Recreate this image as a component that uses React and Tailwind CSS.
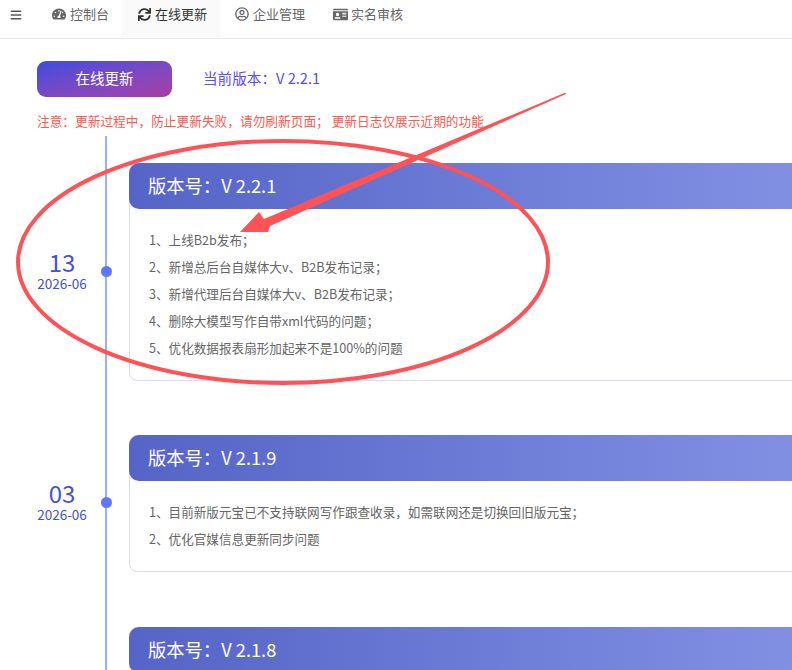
import { FaBars, FaTachometerAlt, FaSync, FaRegUserCircle, FaIdCard } from "react-icons/fa";

const tabs = [
  { label: "控制台", icon: FaTachometerAlt, size: 14 },
  { label: "在线更新", icon: FaSync, size: 13, active: true },
  { label: "企业管理", icon: FaRegUserCircle, size: 14 },
  { label: "实名审核", icon: FaIdCard, size: 15 },
];

const versions = [
  {
    day: "13",
    month: "2026-06",
    version: "V 2.2.1",
    notes: [
      "1、上线B2b发布；",
      "2、新增总后台自媒体大v、B2B发布记录；",
      "3、新增代理后台自媒体大v、B2B发布记录；",
      "4、删除大模型写作自带xml代码的问题；",
      "5、优化数据报表扇形加起来不是100%的问题",
    ],
  },
  {
    day: "03",
    month: "2026-06",
    version: "V 2.1.9",
    notes: [
      "1、目前新版元宝已不支持联网写作跟查收录，如需联网还是切换回旧版元宝；",
      "2、优化官媒信息更新同步问题",
    ],
  },
  { version: "V 2.1.8", notes: [] },
];

function TimelineRow({ item }) {
  return (
    <div className="group flex pt-[27px] pb-[27px] last:pt-[28px] last:pb-0">
      <div className="w-[105px] shrink-0 pl-[37px] flex items-center">
        {item.day && (
          <div className="w-[50px] mb-[6px] flex flex-col items-center text-[#3f51e0]">
            <span className="text-[24px] leading-[27px]">{item.day}</span>
            <span className="text-[13.5px] leading-[16px] whitespace-nowrap">{item.month}</span>
          </div>
        )}
      </div>

      {/* line + dot */}
      <div className="w-[2px] shrink-0 -mt-[27px] -mb-[27px] group-last:-mt-[28px] bg-[#9aaeff] flex items-center justify-center">
        {item.day && <div className="w-[11px] h-[11px] mb-[2px] shrink-0 rounded-full bg-[#5f78fb]" />}
      </div>

      <div className="w-[680px] shrink-0 ml-[22px] min-h-[137px] rounded-[8px] border border-[#dcd8fa]">
        <div className="h-[46px] -m-px mb-0 pl-[19px] flex items-center rounded-[10px] rounded-r-none bg-gradient-to-r from-[#5564c6] to-[#8391e4] text-white text-[18.3px]">
          版本号：{item.version}
        </div>
        {item.notes.length > 0 && (
          <div className="pt-[17px] pb-[19px] px-[19px] text-[12.6px] leading-[27px] text-[#666]">
            {item.notes.map((note) => (
              <p key={note} className="whitespace-nowrap">
                {note}
              </p>
            ))}
          </div>
        )}
      </div>
    </div>
  );
}

export default function App() {
  return (
    <div
      className="relative w-[792px] h-[670px] overflow-hidden bg-white"
      style={{ fontFamily: '"Noto Sans CJK SC", sans-serif' }}
    >
      {/* Top nav */}
      <div className="h-[39px] flex border-b border-[#e9e9e9] text-[13px] text-[#666]">
        <div className="w-[37px] shrink-0 pl-[10px] pb-[8px] flex items-center">
          <FaBars size={12} className="text-[#555]" />
        </div>
        {tabs.map((tab) => {
          const Icon = tab.icon;
          return (
            <div
              key={tab.label}
              className={`pl-[15px] pr-[13px] pb-[10px] flex items-center gap-[4px] ${
                tab.active ? "bg-[#fafafa] text-[#333]" : ""
              }`}
            >
              <span className="w-[14px] flex justify-center">
                <Icon size={tab.size} className="shrink-0" />
              </span>
              <span>{tab.label}</span>
            </div>
          );
        })}
      </div>

      {/* Toolbar */}
      <div className="px-[37px] pt-[22px] flex items-center">
        <button className="w-[135px] h-9 pb-[2px] rounded-[9px] bg-gradient-to-br from-[#3a4ae0] to-[#a93aa6] text-white text-[14.5px]">
          在线更新
        </button>
        <span className="ml-[31px] mb-[2px] text-[14.6px] text-[#5b4cf6]">当前版本：V 2.2.1</span>
      </div>
      <p className="px-[37px] mt-[14px] text-[12.7px] leading-[20px] text-[#ff5a4f] whitespace-nowrap">
        注意：更新过程中，防止更新失败，请勿刷新页面； 更新日志仅展示近期的功能
      </p>

      {/* Timeline */}
      <div className="mt-[5px]">
        {versions.map((item) => (
          <TimelineRow key={item.version} item={item} />
        ))}
      </div>

      {/* Hand-drawn annotation over the page */}
      <svg
        className="absolute inset-0 pointer-events-none"
        width="792"
        height="670"
        viewBox="0 0 792 670"
        fill="none"
      >
        <ellipse cx="283" cy="262" rx="265" ry="121" stroke="#ff5257" strokeWidth="4" />
        <polygon
          points="240,232 259,212 264,219 565.5,92.5 566,94 270,226 268,232"
          fill="#ff5257"
        />
      </svg>
    </div>
  );
}
